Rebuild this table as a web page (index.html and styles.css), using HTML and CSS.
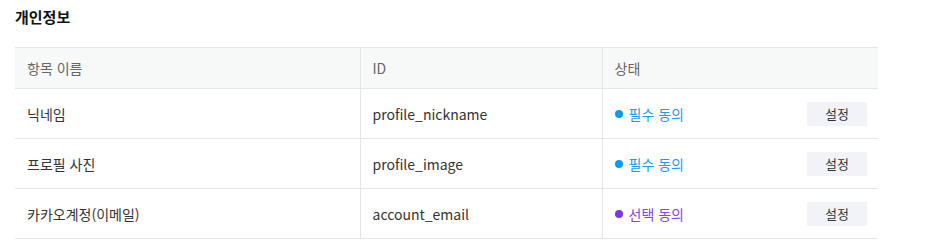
FILE: index.html
```html
<!DOCTYPE html>
<html lang="ko">
<head>
  <meta charset="UTF-8">
  <meta name="viewport" content="width=device-width, initial-scale=1.0">
  <title>개인정보</title>
  <link rel="stylesheet" href="styles.css">
</head>
<body>
  <section class="section">
    <h2 class="section-title">개인정보</h2>

    <table class="scope-table">
      <colgroup>
        <col class="col-name">
        <col class="col-id">
        <col class="col-state">
      </colgroup>
      <thead>
        <tr>
          <th>항목 이름</th>
          <th>ID</th>
          <th>상태</th>
        </tr>
      </thead>
      <tbody>
        <tr>
          <td>닉네임</td>
          <td>profile_nickname</td>
          <td>
            <div class="state">
              <span class="consent required"><span class="dot"></span>필수 동의</span>
              <button class="btn">설정</button>
            </div>
          </td>
        </tr>
        <tr>
          <td>프로필 사진</td>
          <td>profile_image</td>
          <td>
            <div class="state">
              <span class="consent required"><span class="dot"></span>필수 동의</span>
              <button class="btn">설정</button>
            </div>
          </td>
        </tr>
        <tr>
          <td>카카오계정(이메일)</td>
          <td>account_email</td>
          <td>
            <div class="state">
              <span class="consent optional"><span class="dot"></span>선택 동의</span>
              <button class="btn">설정</button>
            </div>
          </td>
        </tr>
      </tbody>
    </table>
  </section>
</body>
</html>
```

FILE: styles.css
```css
body {
  font-family: "Noto Sans CJK KR", "Noto Sans", sans-serif;
  background-color: #fff;
  color: #333;
  margin: 0;
  padding: 0 51px 0 15px;
}
.section-title {
  font-size: 15px;
  font-weight: 700;
  color: #111;
  line-height: 20px;
  margin: 7px 0 20px 0;
}
.scope-table {
  width: 863px;
  border-collapse: collapse;
  table-layout: fixed;
  font-size: 14px;
}
.col-name {
  width: 345px;
}
.col-id {
  width: 242px;
}
.scope-table th,
.scope-table td {
  text-align: left;
  padding: 0 12px;
  border-top: 1px solid #e5e5e5;
  border-bottom: 1px solid #e5e5e5;
  border-left: 1px solid #e5e5e5;
}
.scope-table th:first-child,
.scope-table td:first-child {
  border-left: none;
}
.scope-table th {
  height: 40px;
  font-weight: 400;
  color: #666;
  background-color: #f7f8f8;
}
.scope-table td {
  height: 49px;
  color: #333;
}
.state {
  display: flex;
  align-items: center;
  justify-content: space-between;
}
.consent {
  display: flex;
  align-items: center;
}
.dot {
  width: 8px;
  height: 8px;
  border-radius: 50%;
  margin-right: 6px;
}
.required {
  color: #1a9cf2;
}
.required .dot {
  background-color: #0a9af7;
}
.optional {
  color: #8444f2;
}
.optional .dot {
  background-color: #7b35f3;
}
.btn {
  font-family: inherit;
  font-size: 13px;
  color: #333;
  background-color: #f2f3f8;
  border: none;
  width: 60px;
  height: 24px;
  padding: 0;
  margin-right: -1px;
  cursor: pointer;
}
```
